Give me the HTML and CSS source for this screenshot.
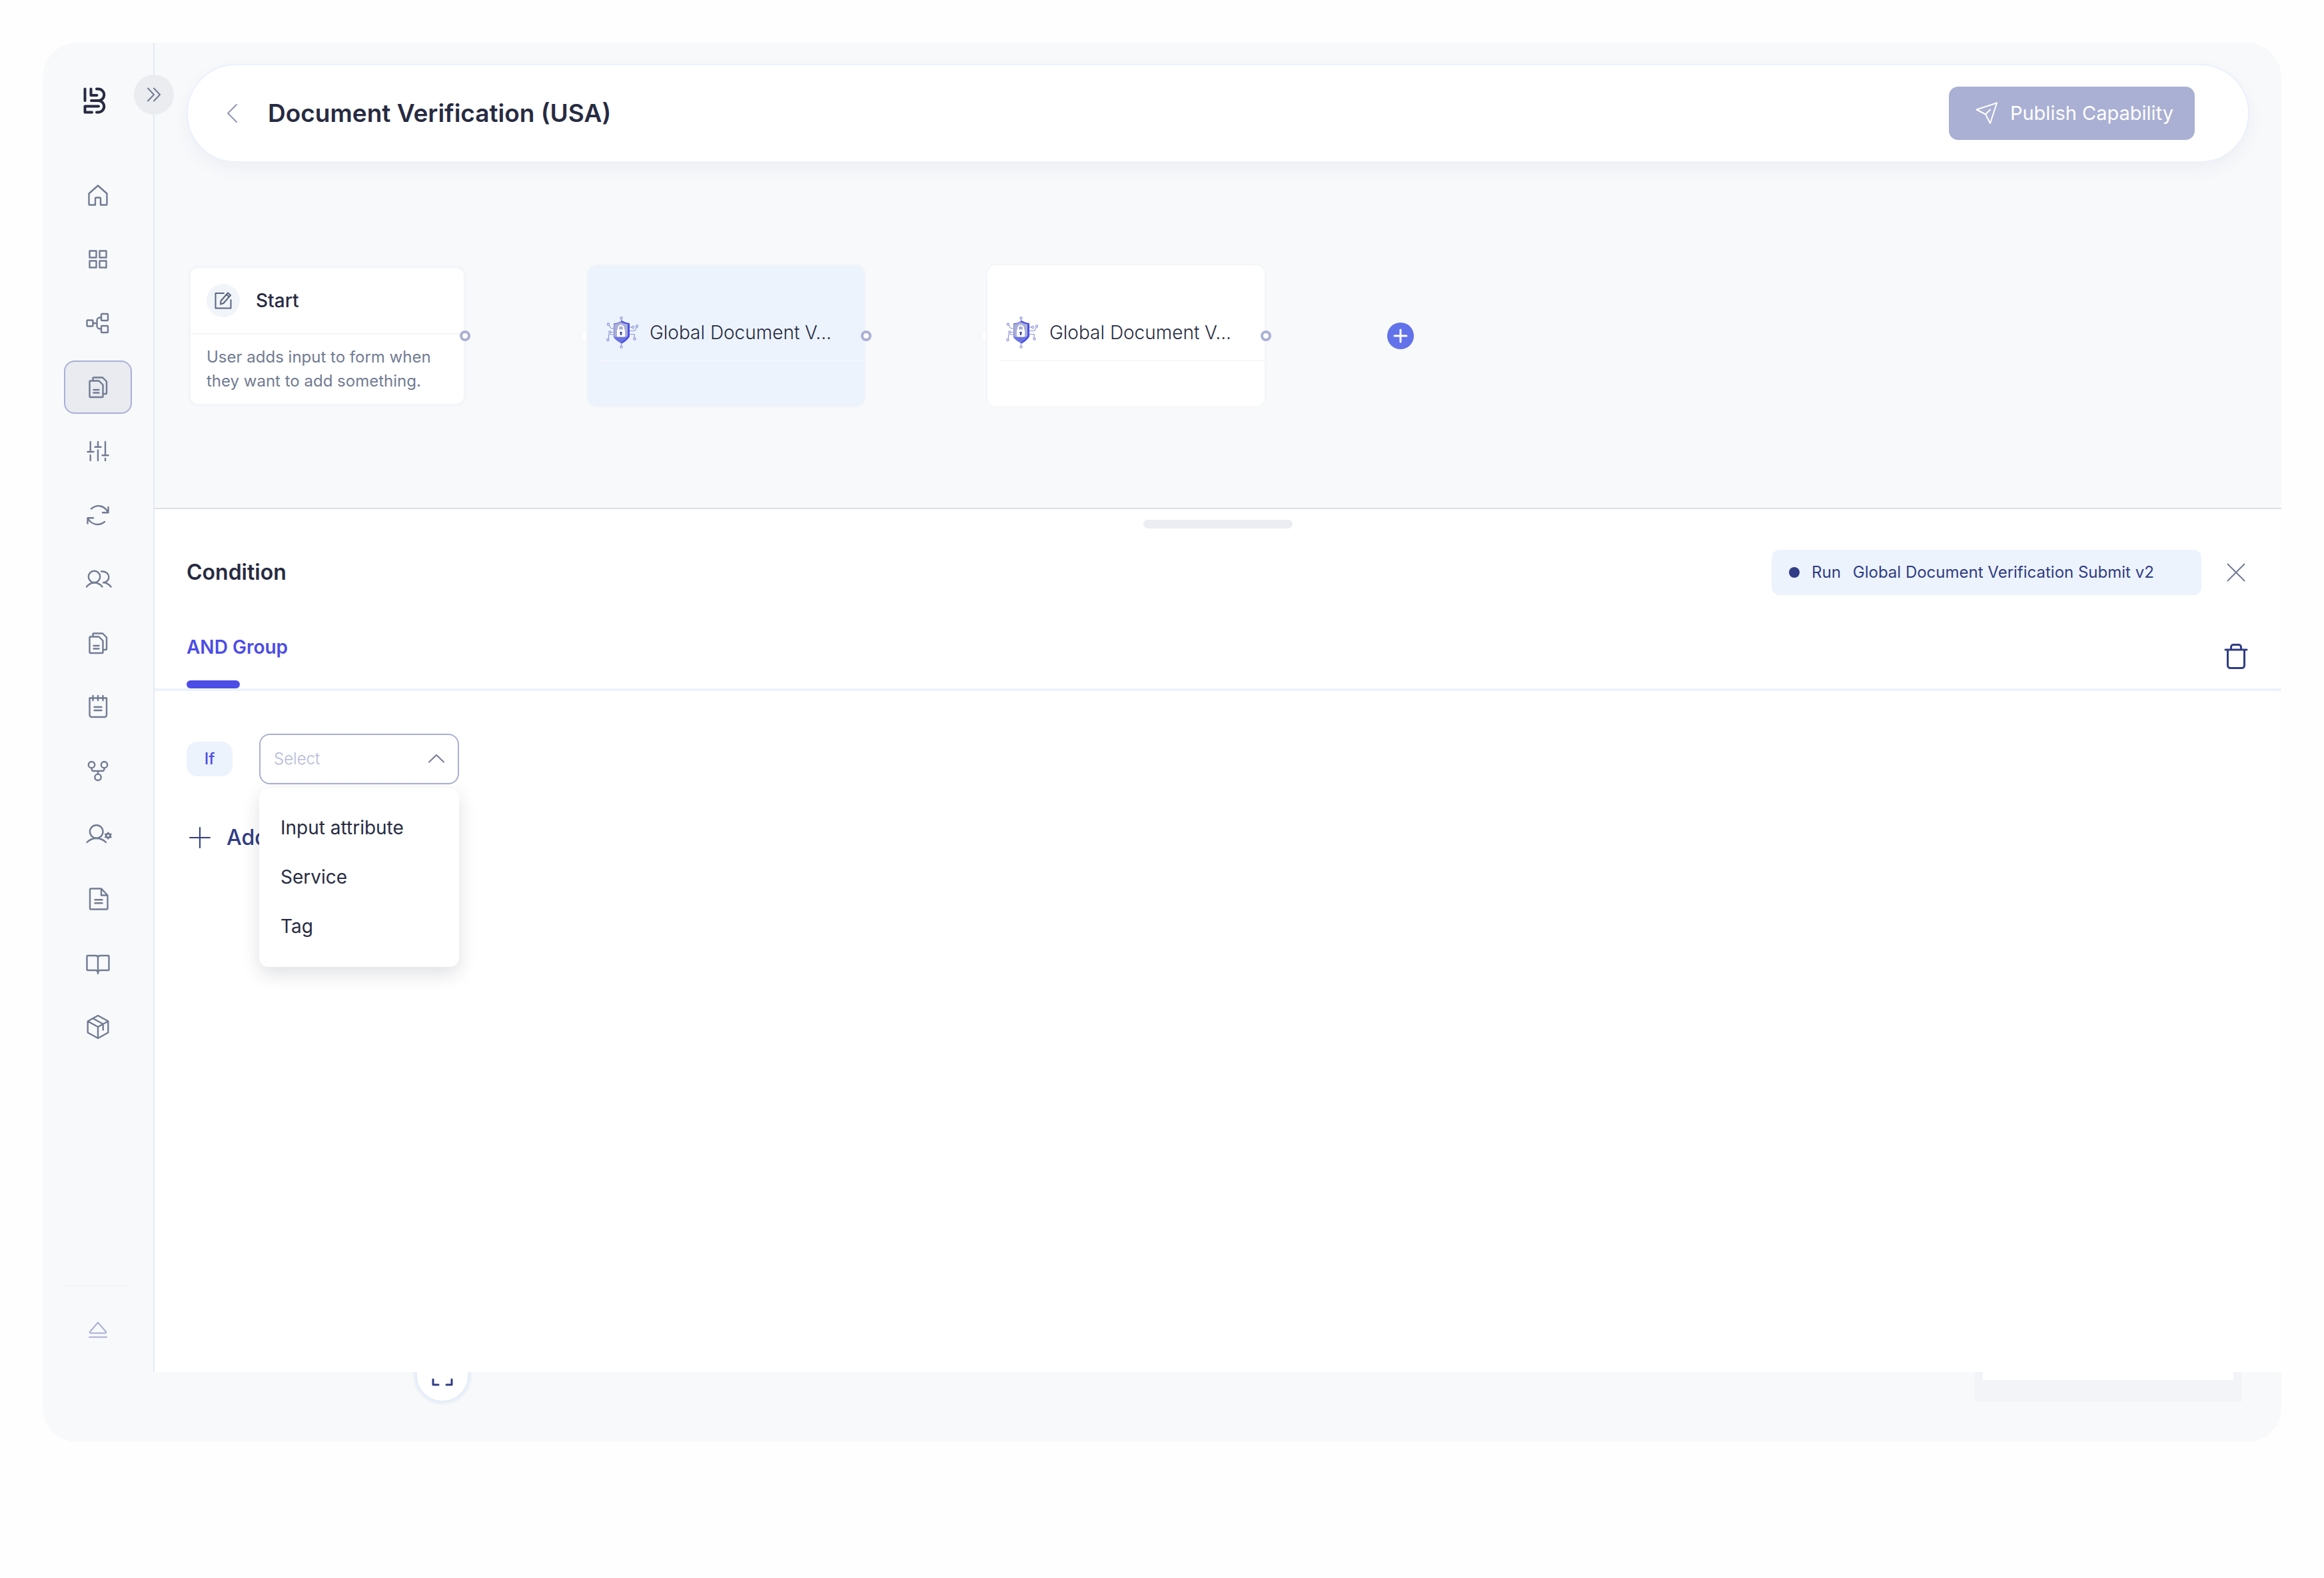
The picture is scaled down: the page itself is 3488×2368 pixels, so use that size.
FILE: index.html
```html
<!DOCTYPE html>
<html lang="en">
<head>
    <meta charset="UTF-8">
    <meta name="viewport" content="width=device-width, initial-scale=1.0">
    <title>Document Verification (USA)</title>
    <link rel="stylesheet" href="styles.css">
</head>
<body>
    <!-- Shared icons -->
    <svg class="sprite" aria-hidden="true">
        <symbol id="icon-docs" viewBox="0 0 36 36">
            <path d="M6.5 8.5h13l6 6V32a1 1 0 0 1-1 1h-18a1 1 0 0 1-1-1V9.500a1 1 0 0 1 1-1z"/>
            <path d="M10.500 8V4.500a1 1 0 0 1 1-1H25l6 6V27a1 1 0 0 1-1 1h-4M11.500 22h8M11.500 26.500h8"/>
        </symbol>
        <symbol id="icon-shield" viewBox="0 0 48 48">
            <g fill="none" stroke="#8f97d6" stroke-width="1.200">
                <path d="M22.500 7V4M22.500 40v4M11 18H7.500L4 13.500M11 23.500H7M11 27H3.500v6M35 16h3M35 21.500h7.500l3-5M35 26.500h7v5"/>
                <circle cx="22.500" cy="2.200" r="1.600"/><circle cx="22.500" cy="45.600" r="1.600"/>
                <circle cx="3" cy="11.500" r="1.600"/><circle cx="5.300" cy="23.500" r="1.600"/>
                <circle cx="2.300" cy="35" r="1.600"/><circle cx="40" cy="16" r="1.600"/>
                <circle cx="46" cy="14.500" r="1.600"/><circle cx="42.500" cy="33.500" r="1.600"/>
            </g>
            <path fill="#4c50e8" d="M23.500 6C27 8.500 31 9.500 35 10v20c-3 5-7 8-11.500 10.500C18 38 14 35 11 31V10.500C16 10 20 8.500 23.500 6z"/>
            <path fill="#a9aed6" d="M21.500 8C25 10 28 11 32 11.500V29c-3 4-6 7-10 9.500-4.500-2.500-8-5-10.500-8.500V11.500C15 11 18.500 10 21.500 8z"/>
            <path fill="#6b74e0" d="M11.500 30.500h19.500c-3 4-5.500 6-9 8-4.500-2.500-8-5-10.500-8z"/>
            <path fill="none" stroke="#fff" stroke-width="2" d="M18 20v-2.500a4 4 0 0 1 8 0V20"/>
            <rect fill="#fff" x="16" y="19.500" width="12" height="11" rx="1"/>
            <path fill="#3440a0" d="M22 22.800a1.700 1.700 0 0 1 1 3.100V28h-2v-2.100a1.700 1.700 0 0 1 1-3.100z"/>
        </symbol>
    </svg>

    <div class="app">
        <div class="workspace">
            <!-- Sidebar -->
            <aside class="sidebar">
                <a class="logo" href="#" aria-label="Home page">
                    <svg width="34" height="40" viewBox="0 0 34 40"><path d="M2.500 2.500V20M11.500 2.500V12h9M20 2.500h2.500a8.500 8.500 0 0 1 0 17.500H12M22.500 20a8.500 8.500 0 0 1 0 17.500H20M23 28.500H2.500v9H13"/></svg>
                </a>
                <button class="sidebar-toggle" aria-label="Expand sidebar">
                    <svg width="20" height="20" viewBox="0 0 20 20"><path d="M1 .5 10 10l-9 9.500M10 .5l9 9.500-9 9.500"/></svg>
                </button>
                <nav class="nav">
                    <a class="nav-link" href="#" aria-label="Home">
                        <svg class="icon" viewBox="0 0 36 36"><path d="M18 3.500 4.500 15.500v16a1 1 0 0 0 1 1h8.500V23a1.500 1.500 0 0 1 1.500-1.500h5a1.500 1.500 0 0 1 1.500 1.500v9.500h8.500a1 1 0 0 0 1-1v-16z"/></svg>
                    </a>
                    <a class="nav-link" href="#" aria-label="Dashboard">
                        <svg class="icon" viewBox="0 0 36 36"><path d="M5.500 5.500h10v10h-10zM20.500 5.500h10v10h-10zM5.500 20.500h10v10h-10zM20.500 20.500h10v10h-10z"/></svg>
                    </a>
                    <a class="nav-link" href="#" aria-label="Workflows">
                        <svg class="icon" viewBox="0 0 36 36"><rect x="1.500" y="13.500" width="9" height="9" rx="1"/><rect x="23" y="4" width="10" height="10" rx="1"/><rect x="23" y="22" width="10" height="10" rx="1"/><path d="M10.500 18h6M23 9.500h-2a4.500 4.500 0 0 0-4.500 4.500v8a4.500 4.500 0 0 0 4.500 4.500h2"/></svg>
                    </a>
                    <a class="nav-link active" href="#" aria-label="Capabilities">
                        <svg class="icon"><use href="#icon-docs"/></svg>
                    </a>
                    <a class="nav-link" href="#" aria-label="Controls">
                        <svg class="icon" viewBox="0 0 36 36"><path d="M6.700 4v15M2.500 19h9M6.700 24v8M18 4v7.500M13.500 11.700h9M18 16.500V32M29 4v20M24.500 24.300h9M29 29v3"/></svg>
                    </a>
                    <a class="nav-link" href="#" aria-label="Sync">
                        <svg class="icon" viewBox="0 0 36 36"><path d="M8 8.500C17 1 27.500 3.500 33.500 14M33.500 6v8.300H25M28 28C19 35 8.500 32.500 2.500 22.500M2.500 30.500v-8.200H11"/></svg>
                    </a>
                    <a class="nav-link" href="#" aria-label="Users">
                        <svg class="icon" viewBox="0 0 36 36"><circle cx="12.500" cy="14.500" r="8.700"/><path d="M1 29.500c6.500-8 17-8 23.500 0M23 6.500c14-1 15 15.500 3 16.800 4 0 8 2 11.500 6.200"/></svg>
                    </a>
                    <a class="nav-link" href="#" aria-label="Documents">
                        <svg class="icon"><use href="#icon-docs"/></svg>
                    </a>
                    <a class="nav-link" href="#" aria-label="Tasks">
                        <svg class="icon" viewBox="0 0 36 36"><path d="M5.500 4.500h25.500v25.500a3 3 0 0 1-3 3H8.500a3 3 0 0 1-3-3zM10.500 1v7M18 1v7M25.500 1v7M12.500 18h11M12.500 23h11"/></svg>
                    </a>
                    <a class="nav-link" href="#" aria-label="Branches">
                        <svg class="icon" viewBox="0 0 36 36"><circle cx="8.500" cy="8.700" r="4.700"/><circle cx="27.500" cy="8.700" r="4.700"/><circle cx="18" cy="27.300" r="4.700"/><path d="M8.500 13.400V15a3 3 0 0 0 3 3h13a3 3 0 0 0 3-3v-1.600M18 18v4.600"/></svg>
                    </a>
                    <a class="nav-link" href="#" aria-label="User settings">
                        <svg class="icon" viewBox="0 0 36 36"><circle cx="15.700" cy="13" r="9.800"/><path d="M1.500 29c8-8 20.500-8 28.500 0"/><path d="m33.300 14.500 1.300 2.400 2.900-.1-1.600 2.200 1.600 2.200-2.900-.1-1.300 2.400-1.300-2.400-2.900.1 1.600-2.200-1.600-2.200 2.900.1z"/></svg>
                    </a>
                    <a class="nav-link" href="#" aria-label="Reports">
                        <svg class="icon" viewBox="0 0 36 36"><path d="M7.500 2.500h15.500l9.500 10V32a1.500 1.500 0 0 1-1.500 1.500H7.500A1.500 1.500 0 0 1 6 32V4a1.500 1.500 0 0 1 1.500-1.500zM23 2.500v10h9.500M13.500 19.300h11M13.500 24.300h11"/></svg>
                    </a>
                    <a class="nav-link" href="#" aria-label="Library">
                        <svg class="icon" viewBox="0 0 36 36"><path d="M18 10c0-2-1.500-3-3.500-3H2.500a1 1 0 0 0-1 1v20a1 1 0 0 0 1 1h12c2 0 3.500 2 3.500 5 0-3 1.500-5 3.500-5h12a1 1 0 0 0 1-1V8a1 1 0 0 0-1-1h-12c-2 0-3.500 1-3.500 3zM18 10v24"/></svg>
                    </a>
                    <a class="nav-link" href="#" aria-label="Packages">
                        <svg class="icon" viewBox="0 0 36 36"><path d="m18 1 15.300 8.500v17L18 35 2.700 26.500v-17zM2.700 9.500 18 18l15.300-8.500M18 18v17M10.500 5.300l15.200 8.400v8.800"/></svg>
                    </a>
                </nav>
                <div class="sidebar-bottom">
                    <button class="eject" aria-label="Log out">
                        <svg width="28" height="26" viewBox="0 0 28 26"><path d="M14 1.500 26 15.500c.7 1 .2 2-1 2H3c-1.200 0-1.700-1-1-2zM1 23.500h26"/></svg>
                    </button>
                </div>
            </aside>

            <main class="main">
                <section class="canvas">
                    <header class="topbar">
                        <button class="back" aria-label="Back">
                            <svg width="16" height="28" viewBox="0 0 16 28"><path d="M15 1 2 14l13 13"/></svg>
                        </button>
                        <h1>Document Verification (USA)</h1>
                        <button class="publish">
                            <svg width="34" height="34" viewBox="0 0 34 34"><path d="M32 1.500 1.500 11.500 15 18.500 22 32zM15 18.500l7-7"/></svg>
                            Publish Capability
                        </button>
                    </header>

                    <!-- Flow nodes -->
                    <div class="flow">
                        <article class="node node-start">
                            <div class="start-head">
                                <span class="start-icon">
                                    <svg width="26" height="28" viewBox="0 0 26 28"><path d="M14 3H1.500v22.500h23V13"/><path d="m20 2.500 4 3.500L13.500 18l-4.500 1.500.5-5zM18 5l4 3.500"/></svg>
                                </span>
                                <h2>Start</h2>
                            </div>
                            <p>User adds input to form when they want to add something.</p>
                            <span class="port"></span>
                        </article>
                        <article class="node selected">
                            <span class="port-in"></span>
                            <div class="node-head">
                                <svg class="shield"><use href="#icon-shield"/></svg>
                                <span>Global Document V...</span>
                            </div>
                            <span class="port"></span>
                        </article>
                        <article class="node">
                            <span class="port-in"></span>
                            <div class="node-head">
                                <svg class="shield"><use href="#icon-shield"/></svg>
                                <span>Global Document V...</span>
                            </div>
                            <span class="port"></span>
                        </article>
                        <button class="add-node" aria-label="Add step">
                            <svg width="20" height="20" viewBox="0 0 20 20"><path d="M10 1v18M1 10h18"/></svg>
                        </button>
                    </div>
                </section>

                <!-- Condition panel -->
                <section class="panel">
                    <div class="handle"></div>
                    <div class="panel-head">
                        <h2>Condition</h2>
                        <div class="run-pill">
                            <span class="dot"></span>
                            <span>Run</span>
                            <span>Global Document Verification Submit v2</span>
                        </div>
                        <button class="icon-btn" aria-label="Close">
                            <svg class="close-icon" width="28" height="28" viewBox="0 0 28 28"><path d="m1.500 1.500 25 25M26.500 1.500l-25 25"/></svg>
                        </button>
                    </div>
                    <div class="tabs">
                        <button class="tab">AND Group</button>
                        <button class="icon-btn" aria-label="Delete group">
                            <svg class="trash-icon" width="34" height="38" viewBox="0 0 34 38"><path d="M1 9h32M4.500 9v23.500a4 4 0 0 0 4 4h17a4 4 0 0 0 4-4V9M9.500 9V5a3.500 3.500 0 0 1 3.500-3.500h8A3.500 3.500 0 0 1 24.500 5v4"/></svg>
                        </button>
                    </div>
                    <div class="conditions">
                        <div class="condition-row">
                            <label class="if-badge" for="source">If</label>
                            <div class="dropdown">
                                <select id="source">
                                    <option>Select</option>
                                </select>
                                <svg class="chevron" width="24" height="14" viewBox="0 0 24 14"><path d="M1 12.500 12 2l11 10.500"/></svg>
                                <ul class="menu">
                                    <li><button>Input attribute</button></li>
                                    <li><button>Service</button></li>
                                    <li><button>Tag</button></li>
                                </ul>
                            </div>
                        </div>
                        <button class="add-condition">
                            <svg width="32" height="32" viewBox="0 0 32 32"><path d="M16 1v30M1 16h30"/></svg>
                            Add
                        </button>
                    </div>
                </section>
            </main>
        </div>

        <!-- Bottom edge of the canvas, shown under the panel -->
        <div class="canvas-edge">
            <button class="fit" aria-label="Fit view">
                <svg width="32" height="32" viewBox="0 0 32 32"><path d="M2 9V2h8M22 2h8v7M2 22v8h8M22 30h8v-8"/></svg>
            </button>
            <div class="minimap"></div>
        </div>
    </div>
</body>
</html>
```
FILE: styles.css
```css
* {
    box-sizing: border-box;
}

body {
    display: flex;
    min-height: 100vh;
    margin: 0;
    padding: 64px 64px 204px;
    background: #fefefe;
    color: #272b41;
    font-family: 'Inter', 'Liberation Sans', sans-serif;
    font-size: 28px;
    line-height: 36px;
}

h1, h2, p, ul {
    margin: 0;
    padding: 0;
}

button {
    padding: 0;
    border: none;
    background: none;
    color: inherit;
    font: inherit;
    cursor: pointer;
}

svg {
    display: block;
    flex-shrink: 0;
    overflow: visible;
    fill: none;
    stroke: currentColor;
    stroke-width: 2px;
    stroke-linecap: round;
    stroke-linejoin: round;
}

.sprite {
    position: absolute;
    width: 0;
    height: 0;
}

.app {
    display: flex;
    flex: 1;
    flex-direction: column;
    overflow: hidden;
    border-radius: 52px;
    background: #f8f9fb;
}

.workspace {
    display: flex;
    flex: 1;
}

/* Sidebar */
.sidebar {
    position: relative;
    display: flex;
    flex-direction: column;
    align-items: center;
    width: 168px;
    padding-top: 67px;
    border-right: 2px solid #e3e9f4;
    color: #717b92;
}

.logo {
    align-self: flex-start;
    margin-left: 61px;
    color: #272b41;
}

.logo svg {
    stroke-width: 4px;
}

.sidebar-toggle {
    position: absolute;
    top: 48px;
    right: -31px;
    display: grid;
    place-items: center;
    width: 60px;
    height: 60px;
    border-radius: 50%;
    background: #ebecf0;
}

.nav {
    display: flex;
    flex-direction: column;
    gap: 16px;
    margin-top: 82px;
}

.nav-link {
    display: grid;
    place-items: center;
    width: 102px;
    height: 80px;
    border: 2px solid transparent;
    border-radius: 16px;
    color: inherit;
}

.nav-link.active {
    border-color: #aab0d4;
    background: #e9ebf1;
}

.icon {
    width: 36px;
    height: 36px;
    stroke-width: 2.4;
}

.sidebar-bottom {
    display: flex;
    justify-content: center;
    width: 102px;
    height: 130px;
    margin-top: auto;
    padding-top: 52px;
    border-top: 2px solid #f4f5f8;
}

.eject {
    height: 26px;
    color: #aab0d4;
}

/* Canvas */
.main {
    display: flex;
    flex: 1;
    flex-direction: column;
    min-width: 0;
}

.canvas {
    padding: 32px 48px 152px;
}

.topbar {
    display: flex;
    align-items: center;
    height: 148px;
    padding: 0 80px 0 58px;
    border: 2px solid #eaf1fd;
    border-radius: 74px;
    background: #fff;
    box-shadow: 0 10px 24px rgba(40, 50, 90, 0.05);
}

.topbar h1 {
    margin-left: 46px;
    font-size: 37px;
    font-weight: 600;
}

.back {
    color: #8f97b8;
}

.publish {
    display: flex;
    align-items: center;
    gap: 18px;
    height: 80px;
    margin-left: auto;
    padding: 0 32px 0 40px;
    border-radius: 14px;
    background: #aab0d4;
    color: #fff;
    font-size: 29px;
}

.flow {
    display: flex;
    align-items: center;
    gap: 184px;
    margin-top: 154px;
    padding-left: 4px;
}

.node {
    position: relative;
    width: 416px;
    height: 212px;
    border-radius: 14px;
    background: #fff;
    box-shadow: 0 0 4px rgba(40, 50, 90, 0.05);
}

.node.selected {
    background: #ecf3fd;
}

.node-start {
    width: 414px;
    height: auto;
    border: 2px solid #f4f5f8;
}

.start-head {
    display: flex;
    align-items: center;
    gap: 24px;
    padding: 24px;
    border-bottom: 2px solid #f4f5f8;
}

.start-head h2 {
    font-size: 28px;
    font-weight: 500;
}

.start-icon {
    display: grid;
    place-items: center;
    width: 50px;
    height: 50px;
    border-radius: 50%;
    background: #f1f4f8;
    color: #596480;
}

.node-start p {
    padding: 16px 24px;
    color: #717b92;
    font-size: 24px;
}

.node-head {
    display: flex;
    align-items: center;
    gap: 17px;
    margin-left: 20px;
    padding: 77px 0 17px 8px;
    border-bottom: 2px solid #f5f6f9;
    font-weight: 300;
}

.shield {
    width: 48px;
    height: 48px;
    stroke: none;
}

.port {
    position: absolute;
    top: calc(50% - 8px);
    right: -10px;
    width: 16px;
    height: 16px;
    border: 4px solid #aab0d4;
    border-radius: 50%;
    background: #fff;
}

.port-in {
    position: absolute;
    top: calc(50% - 6px);
    left: -7px;
    width: 4px;
    height: 12px;
    background: #fff;
}

.add-node {
    display: grid;
    place-items: center;
    width: 40px;
    height: 40px;
    border-radius: 50%;
    background: #6272ea;
    color: #fff;
}

.add-node svg {
    stroke-width: 3px;
}

/* Condition panel */
.panel {
    flex: 1;
    padding-top: 16px;
    border-top: 2px solid #dddee3;
    background: #fff;
}

.handle {
    width: 224px;
    height: 13px;
    margin: 0 auto;
    border-radius: 7px;
    background: #ebedf2;
}

.panel-head {
    display: flex;
    align-items: center;
    padding: 32px 48px 0;
}

.panel-head h2 {
    font-size: 32px;
    font-weight: 600;
}

.run-pill {
    display: flex;
    align-items: center;
    gap: 18px;
    width: 645px;
    height: 68px;
    margin-left: auto;
    padding: 0 26px;
    border-radius: 12px;
    background: #ecf3fd;
    color: #303c84;
    font-size: 24px;
}

.dot {
    width: 16px;
    height: 16px;
    border-radius: 50%;
    background: #303c84;
}

.icon-btn {
    display: grid;
    place-items: center;
    width: 40px;
    height: 40px;
}

.panel-head .icon-btn {
    margin-left: 32px;
    color: #717b92;
}

.tabs {
    display: flex;
    align-items: flex-end;
    justify-content: space-between;
    padding: 60px 48px 0;
    border-bottom: 4px solid #ecf3fd;
}

.tabs .icon-btn {
    margin-bottom: 28px;
    color: #303c84;
}

.trash-icon {
    stroke-width: 3px;
}

.tab {
    color: #4c4ce6;
    font-weight: 600;
}

.tab::after {
    content: "";
    display: block;
    width: 80px;
    height: 12px;
    margin-top: 32px;
    border-radius: 6px;
    background: #4c4ce6;
}

.conditions {
    padding: 64px 48px;
}

.condition-row {
    display: flex;
    align-items: center;
    gap: 40px;
}

.if-badge {
    display: grid;
    place-items: center;
    width: 69px;
    height: 52px;
    border-radius: 16px;
    background: #ecf3fd;
    color: #4c4ce6;
    font-size: 24px;
    font-weight: 500;
}

.dropdown {
    position: relative;
    width: 300px;
}

.dropdown select {
    display: block;
    width: 100%;
    height: 76px;
    padding: 0 20px;
    border: 2px solid #aab0d4;
    border-radius: 16px;
    appearance: none;
    background: #fff;
    color: #b4b9d8;
    font: inherit;
    font-size: 24px;
    font-weight: 300;
}

.chevron {
    position: absolute;
    top: 30px;
    right: 22px;
    color: #717b92;
}

.menu {
    position: absolute;
    top: 82px;
    left: 0;
    width: 100%;
    padding: 22px 0 24px;
    border-radius: 14px;
    background: #fff;
    box-shadow: 0 10px 28px rgba(30, 35, 60, 0.14);
    list-style: none;
}

.menu button {
    display: block;
    width: 100%;
    height: 74px;
    padding: 0 32px;
    text-align: left;
}

.add-condition {
    display: flex;
    align-items: center;
    gap: 24px;
    margin: 62px 0 0 4px;
    color: #303c84;
    font-size: 32px;
    font-weight: 500;
}

/* Bottom edge */
.canvas-edge {
    position: relative;
    height: 105px;
    overflow: hidden;
}

.fit {
    position: absolute;
    top: -37px;
    left: 558px;
    display: grid;
    place-items: center;
    width: 84px;
    height: 84px;
    border: 4px solid #e6eefa;
    border-radius: 50%;
    background: #fff;
    box-shadow: 0 0 0 3px #f3f4f7;
    color: #303c84;
}

.fit svg {
    stroke-width: 3px;
}

.minimap {
    position: absolute;
    right: 60px;
    bottom: 60px;
    width: 400px;
    height: 300px;
    border: 12px solid #f3f4f7;
    border-bottom-width: 33px;
    background: #fff;
}
```
